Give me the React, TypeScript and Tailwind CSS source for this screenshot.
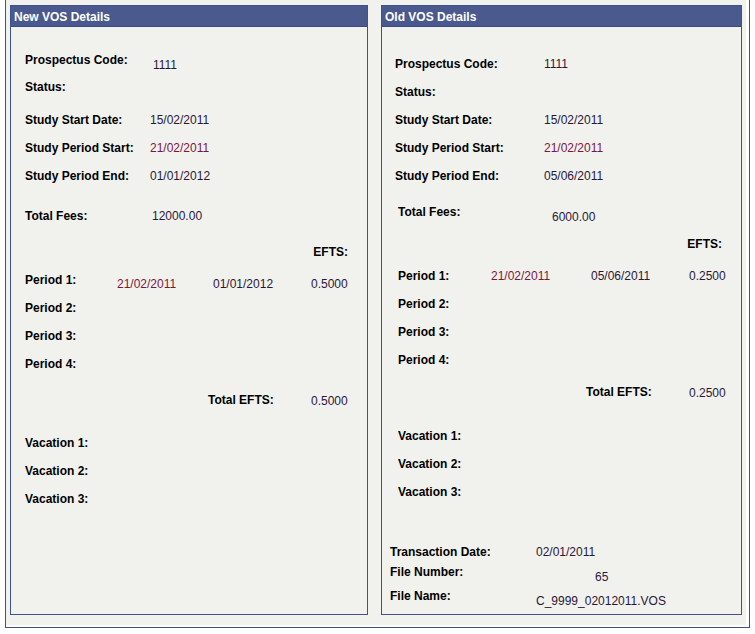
import React from 'react'

const font = { fontFamily: '"Liberation Sans", Arial, sans-serif' }

const Label: React.FC<{ w?: string; children?: React.ReactNode }> = ({ w = '', children }) => (
  <span className={`shrink-0 font-bold text-black ${w}`}>{children}</span>
)

const Val: React.FC<{ red?: boolean; cls?: string; children?: React.ReactNode }> = ({ red, cls = '', children }) => (
  <span className={`shrink-0 ${red ? 'text-[#7a1640]' : 'text-[#2a1638]'} ${cls}`}>{children}</span>
)

const Row: React.FC<{ cls?: string; children?: React.ReactNode }> = ({ cls = '', children }) => (
  <div className={`flex h-[14px] items-start whitespace-nowrap ${cls}`}>{children}</div>
)

const Panel: React.FC<{ title: string; w: string; children?: React.ReactNode }> = ({ title, w, children }) => (
  <div className={`h-[610px] ${w} border border-[#3f5190] bg-[#f1f2ee]`}>
    <div className="h-[21px] border-b border-[#3a4a84] bg-[#4a5a8e] pl-[3px] pt-[1px] text-[12px] font-bold leading-[20px] text-white">
      {title}
    </div>
    <div className="pt-[1px] text-[12px] leading-[14px]">{children}</div>
  </div>
)

export default function App() {
  return (
    <div className="bg-white" style={font}>
      <div className="ml-[5px] w-[745px] border-x border-b border-[#3f5190]">
        <div className="mb-[2px] mr-[3px] flex gap-[13px] bg-[#f1f2ee] pb-[10px] pl-[4px] pt-[5px]">
          <Panel title="New VOS Details" w="w-[358px]">
            <div className="pl-[14px]">
              <Row cls="mt-[25px]">
                <Label w="w-[125px]">Prospectus Code:</Label>
                <Val cls="ml-[3px] mt-[5px]">1111</Val>
              </Row>
              <Row cls="mt-[13px]">
                <Label>Status:</Label>
              </Row>
              <Row cls="mt-[19px]">
                <Label w="w-[125px]">Study Start Date:</Label>
                <Val>15/02/2011</Val>
              </Row>
              <Row cls="mt-[14px]">
                <Label w="w-[125px]">Study Period Start:</Label>
                <Val red>21/02/2011</Val>
              </Row>
              <Row cls="mt-[14px]">
                <Label w="w-[125px]">Study Period End:</Label>
                <Val>01/01/2012</Val>
              </Row>
              <Row cls="mt-[26px]">
                <Label w="w-[127px]">Total Fees:</Label>
                <Val>12000.00</Val>
              </Row>
              <Row cls="mt-[22px]">
                <div className="w-[323px] text-right">
                  <Label>EFTS:</Label>
                </div>
              </Row>
              <Row cls="mt-[14px]">
                <Label w="w-[92px]">Period 1:</Label>
                <Val red cls="mt-[4px] w-[96px]">21/02/2011</Val>
                <Val cls="mt-[4px] w-[98px]">01/01/2012</Val>
                <Val cls="mt-[4px]">0.5000</Val>
              </Row>
              <Row cls="mt-[14px]">
                <Label>Period 2:</Label>
              </Row>
              <Row cls="mt-[14px]">
                <Label>Period 3:</Label>
              </Row>
              <Row cls="mt-[14px]">
                <Label>Period 4:</Label>
              </Row>
              <Row cls="mt-[22px] pl-[183px]">
                <Label w="w-[103px]">Total EFTS:</Label>
                <Val cls="mt-[1px]">0.5000</Val>
              </Row>
              <Row cls="mt-[29px]">
                <Label>Vacation 1:</Label>
              </Row>
              <Row cls="mt-[14px]">
                <Label>Vacation 2:</Label>
              </Row>
              <Row cls="mt-[14px]">
                <Label>Vacation 3:</Label>
              </Row>
            </div>
          </Panel>

          <Panel title="Old VOS Details" w="w-[361px]">
            <div className="pl-[13px]">
              <Row cls="mt-[29px]">
                <Label w="w-[149px]">Prospectus Code:</Label>
                <Val>1111</Val>
              </Row>
              <Row cls="mt-[14px]">
                <Label>Status:</Label>
              </Row>
              <Row cls="mt-[14px]">
                <Label w="w-[149px]">Study Start Date:</Label>
                <Val>15/02/2011</Val>
              </Row>
              <Row cls="mt-[14px]">
                <Label w="w-[149px]">Study Period Start:</Label>
                <Val red>21/02/2011</Val>
              </Row>
              <Row cls="mt-[14px]">
                <Label w="w-[149px]">Study Period End:</Label>
                <Val>05/06/2011</Val>
              </Row>
            </div>
            <div className="pl-[16px]">
              <Row cls="mt-[22px]">
                <Label w="w-[154px]">Total Fees:</Label>
                <Val cls="mt-[5px]">6000.00</Val>
              </Row>
              <Row cls="mt-[18px]">
                <div className="w-[324px] text-right">
                  <Label>EFTS:</Label>
                </div>
              </Row>
              <Row cls="mt-[18px]">
                <Label w="w-[93px]">Period 1:</Label>
                <Val red cls="w-[100px]">21/02/2011</Val>
                <Val cls="w-[98px]">05/06/2011</Val>
                <Val>0.2500</Val>
              </Row>
              <Row cls="mt-[14px]">
                <Label>Period 2:</Label>
              </Row>
              <Row cls="mt-[14px]">
                <Label>Period 3:</Label>
              </Row>
              <Row cls="mt-[14px]">
                <Label>Period 4:</Label>
              </Row>
              <Row cls="mt-[18px] pl-[188px]">
                <Label w="w-[103px]">Total EFTS:</Label>
                <Val cls="mt-[1px]">0.2500</Val>
              </Row>
              <Row cls="mt-[30px]">
                <Label>Vacation 1:</Label>
              </Row>
              <Row cls="mt-[14px]">
                <Label>Vacation 2:</Label>
              </Row>
              <Row cls="mt-[14px]">
                <Label>Vacation 3:</Label>
              </Row>
            </div>
            <div className="pl-[8px]">
              <Row cls="mt-[46px]">
                <Label w="w-[146px]">Transaction Date:</Label>
                <Val>02/01/2011</Val>
              </Row>
              <Row cls="mt-[6px]">
                <Label w="w-[205px]">File Number:</Label>
                <Val cls="mt-[5px]">65</Val>
              </Row>
              <Row cls="mt-[10px]">
                <Label w="w-[146px]">File Name:</Label>
                <Val cls="mt-[5px]">C_9999_02012011.VOS</Val>
              </Row>
            </div>
          </Panel>
        </div>
      </div>
    </div>
  )
}
